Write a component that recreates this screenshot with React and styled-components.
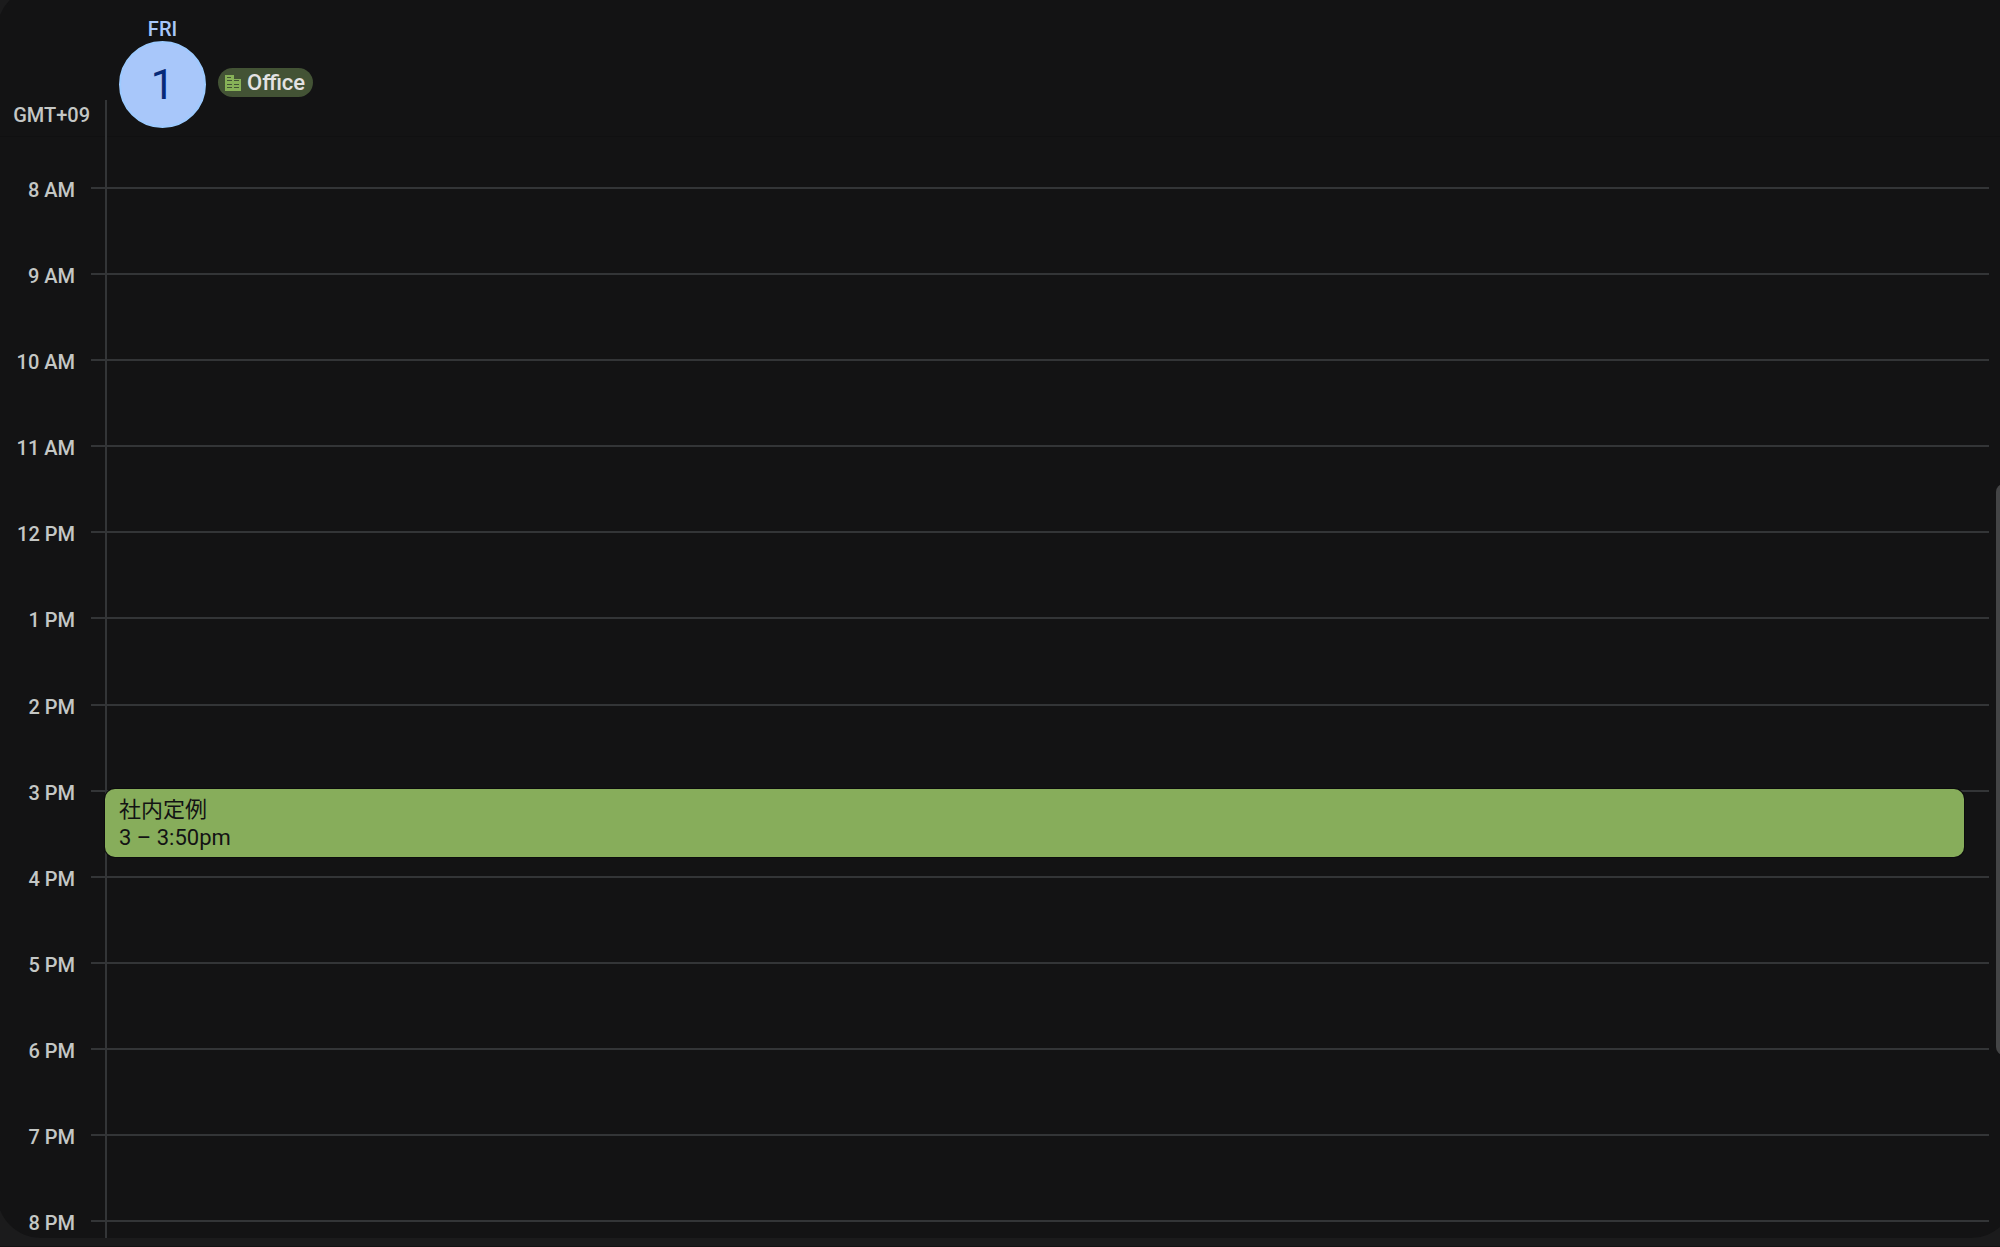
import React from "react";
import styled, { createGlobalStyle } from "styled-components";

const GlobalStyle = createGlobalStyle`
  *, *::before, *::after { box-sizing: border-box; }
  body {
    margin: 0;
    background: #1b1b1c;
    font-family: Roboto, "Noto Sans CJK JP", "Liberation Sans", sans-serif;
  }
`;

const Page = styled.div`
  display: flex;
  flex-direction: column;
  height: 100vh;
  padding-bottom: 8px;
  overflow: hidden;
  background: #1b1b1c;
  border-bottom: 1px solid #141213;
`;

/* The rounded surface runs past the top and both sides of the window. */
const Panel = styled.main`
  display: flex;
  flex-direction: column;
  flex: 1;
  min-height: 0;
  margin: -13px -15px 0 -3px;
  padding-top: 13px;
  background: #131314;
  border-radius: 44px;
  overflow: hidden;
`;

const Header = styled.header`
  display: grid;
  grid-template-columns: 108px 1fr;
  align-items: end;
  height: 137px;
  border-bottom: 1px solid #101011;
`;

const ZoneLabel = styled.div`
  align-self: end;
  padding: 0 15px 10px 0;
  color: #c4c7c5;
  font-size: 20px;
  font-weight: 500;
  line-height: 24px;
  text-align: right;
`;

const DayHead = styled.div`
  display: flex;
  align-items: flex-end;
  gap: 12px;
  height: 137px;
  padding: 0 0 9px 14px;
  background: linear-gradient(#333537, #333537) left bottom / 2px 37px no-repeat;
`;

const DayTitle = styled.h2`
  display: flex;
  flex-direction: column;
  align-items: center;
  margin: 0;
  font-weight: 500;
`;

const Weekday = styled.span`
  color: #a8c7fa;
  font-size: 20px;
  line-height: 24px;
`;

const DayNumber = styled.button`
  width: 87px;
  height: 87px;
  padding: 0;
  border: 2px solid #9dcaff;
  border-radius: 50%;
  background: #a8c7fa;
  color: #062a78;
  font-family: inherit;
  font-size: 42px;
  line-height: 44px;
  text-align: center;
`;

const LocationChip = styled.button`
  display: flex;
  align-items: center;
  gap: 6px;
  height: 29px;
  margin-bottom: 31px;
  padding: 0 8px 0 7px;
  border: 0;
  border-radius: 15px;
  background: #435335;
  color: #e3e3e3;
  font-family: inherit;
  font-size: 22px;
  font-weight: 500;
  line-height: 28px;
`;

const Body = styled.div`
  display: flex;
  flex: 1;
  gap: 7px;
  min-height: 0;
`;

const HourGrid = styled.div`
  display: grid;
  flex: 1;
  grid-template-columns: 78px 16px 14px 1fr;
  grid-template-rows: 50px repeat(12, minmax(0, 1fr)) 18px;
`;

const HourLabel = styled.div`
  grid-column: 1;
  grid-row: ${(p) => p.$row};
  margin-top: -9px;
  color: #c4c7c5;
  font-size: 20px;
  font-weight: 500;
  line-height: 24px;
  text-align: right;
  white-space: nowrap;
`;

const HourLine = styled.div`
  grid-column: 3 / 5;
  grid-row: ${(p) => p.$row};
  border-top: 2px solid #333537;
`;

const DayColumn = styled.div`
  grid-column: 4;
  grid-row: 1 / -1;
  border-left: 2px solid #333537;
`;

const EventCard = styled.button`
  grid-column: 4;
  grid-row: ${(p) => p.$row};
  display: flex;
  flex-direction: column;
  align-items: flex-start;
  justify-content: flex-start;
  height: 80%;
  margin: -1px 25px 0 0;
  padding: 7px 14px;
  border: 0;
  border-radius: 10px;
  background: #87ad5b;
  box-shadow: 0 0 0 1px #0c0c0d;
  color: #131314;
  font-family: inherit;
  font-size: 22px;
  line-height: 28px;
  text-align: left;
`;

const ScrollTrack = styled.div`
  display: grid;
  grid-template-rows: 347fr 571fr 183fr;
  width: 19px;
`;

const ScrollThumb = styled.div`
  grid-row: 2;
  border-radius: 8px;
  background: #444546;
`;

const OfficeIcon = () => (
  <svg width="16" height="16" viewBox="0 0 16 16" aria-hidden="true">
    <path fill="#87b158" d="M0 0h9v4h7v12H0V0Z" />
    <path
      fill="#435335"
      d="M2 2h4v1H2V2Zm0 3h5v1H2V5Zm0 4h5v1H2V9Zm0 3h5v1H2v-1Zm7-7h5v1H9V5Zm0 4h5v1H9V9Zm0 3h5v1H9v-1Z"
    />
  </svg>
);

const HOURS = [
  "8 AM", "9 AM", "10 AM", "11 AM", "12 PM", "1 PM", "2 PM",
  "3 PM", "4 PM", "5 PM", "6 PM", "7 PM", "8 PM",
];

const rowOf = (hour) => HOURS.indexOf(hour) + 2;

export default function App() {
  return (
    <>
      <GlobalStyle />
      <Page>
        <Panel>
          <Header>
            <ZoneLabel>GMT+09</ZoneLabel>
            <DayHead>
              <DayTitle>
                <Weekday>FRI</Weekday>
                <DayNumber type="button">1</DayNumber>
              </DayTitle>
              <LocationChip type="button">
                <OfficeIcon />
                Office
              </LocationChip>
            </DayHead>
          </Header>
          <Body>
            <HourGrid>
              {HOURS.map((hour) => (
                <React.Fragment key={hour}>
                  <HourLabel $row={rowOf(hour)}>{hour}</HourLabel>
                  <HourLine $row={rowOf(hour)} />
                </React.Fragment>
              ))}
              <DayColumn />
              <EventCard type="button" $row={rowOf("3 PM")}>
                <span>社内定例</span>
                <span>3 – 3:50pm</span>
              </EventCard>
            </HourGrid>
            <ScrollTrack>
              <ScrollThumb />
            </ScrollTrack>
          </Body>
        </Panel>
      </Page>
    </>
  );
}
